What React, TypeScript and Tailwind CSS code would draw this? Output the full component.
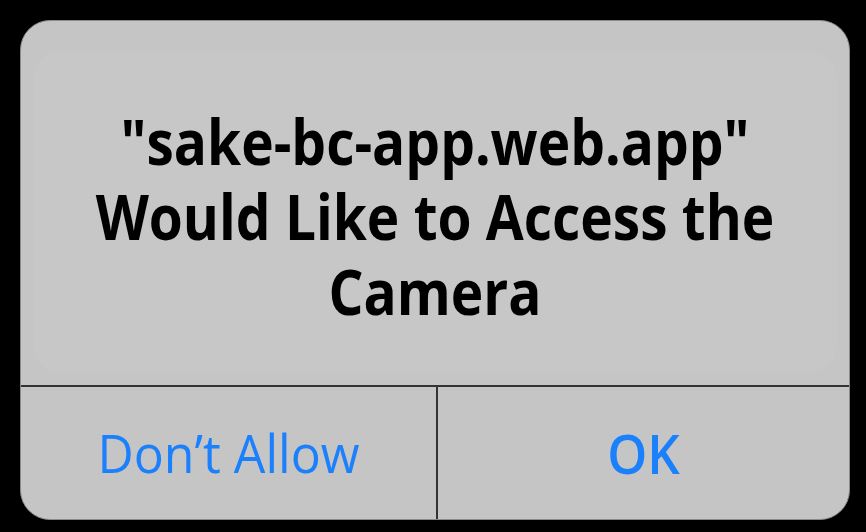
import React from 'react';

const lines = ['"sake-bc-app.web.app"', 'Would Like to Access the', 'Camera'];

export default function App() {
  return (
    <div className="w-[866px] h-[532px] bg-black p-[20px] pr-[16px] pb-[12px]">
      <div className="w-[830px] h-[500px] rounded-[30px] bg-[#c5c5c5] overflow-hidden flex flex-col border border-[#8a8a8a]">
        <div className="h-[364px] px-[12px] pt-[30px] pb-[12px] flex">
          <div className="flex-1 rounded-[28px] bg-[#c7c7c7] flex flex-col items-center gap-[9px] pt-[57px] font-['Open_Sans',sans-serif] font-bold text-black">
            {lines.map((l) => (
              <div key={l} className="text-[55px] leading-[66px] scale-y-[1.13] whitespace-nowrap">
                {l}
              </div>
            ))}
          </div>
        </div>
        <div className="h-[2px] bg-[#333336]" />
        <div className="flex-1 flex">
          <div className="w-[415px] flex items-center justify-center font-['Open_Sans',sans-serif] text-[50px] scale-y-[1.07] text-[#1a80fb]">
            Don’t Allow
          </div>
          <div className="w-[2px] bg-[#333336]" />
          <div className="flex-1 flex items-center justify-center font-['Open_Sans',sans-serif] font-semibold text-[51px] scale-y-[1.07] text-[#1a80fb]">
            OK
          </div>
        </div>
      </div>
    </div>
  );
}
